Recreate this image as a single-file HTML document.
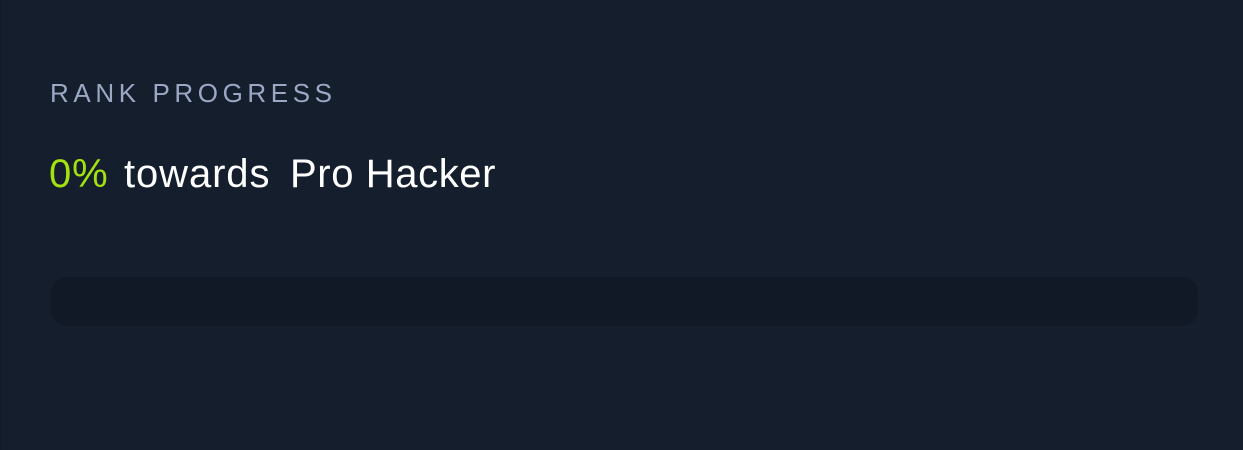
<!DOCTYPE html>
<html><head><style>
html,body{margin:0;padding:0}
body{width:1243px;height:450px;background:#151e2d;position:relative;overflow:hidden;font-family:"Liberation Sans",sans-serif;border-left:1px solid #111827;box-sizing:border-box}
.lbl{position:absolute;left:49px;top:78px;font-size:26px;letter-spacing:4.6px;color:#9aa8c4;line-height:30px;white-space:nowrap}
.t{position:absolute;top:152px;font-size:40px;letter-spacing:0.9px;line-height:44px;color:#fff;white-space:nowrap}
.bar{position:absolute;left:50px;top:277px;width:1147px;height:49px;border-radius:16px;background:#121926}
</style></head><body>
<div class="lbl">RANK PROGRESS</div>
<div class="t" style="left:48px;color:#a3e20f">0%</div>
<div class="t" style="left:123px">towards</div>
<div class="t" style="left:289px;letter-spacing:0.6px">Pro Hacker</div>
<div class="bar"></div>
</body></html>
